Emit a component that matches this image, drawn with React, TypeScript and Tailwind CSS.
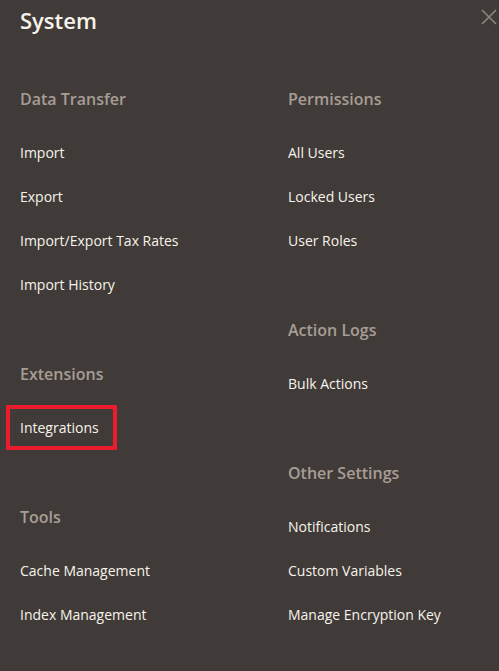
import React from 'react';

type Section = { title: string; items: string[] };

const left: Section[] = [
    { title: 'Data Transfer', items: ['Import', 'Export', 'Import/Export Tax Rates', 'Import History'] },
    { title: 'Extensions', items: ['Integrations'] },
    { title: 'Tools', items: ['Cache Management', 'Index Management'] },
];

const right: Section[] = [
    { title: 'Permissions', items: ['All Users', 'Locked Users', 'User Roles'] },
    { title: 'Action Logs', items: ['Bulk Actions'] },
    { title: 'Other Settings', items: ['Notifications', 'Custom Variables', 'Manage Encryption Key'] },
];

const MenuColumn: React.FC<{ sections: Section[] }> = ({ sections }) => (
    <div className="flex flex-col gap-[45px]">
        {sections.map((s) => (
            <div key={s.title}>
                <div className="h-11 flex items-center text-[16px] font-semibold text-[#a79d95]">{s.title}</div>
                <ul className="mt-[10px]">
                    {s.items.map((item) => (
                        <li key={item} className="relative h-11 flex items-center pb-[2px] text-[14px] text-[#f7f3eb]">
                            {item}
                            {item === 'Integrations' && (
                                <span className="absolute left-[-14px] top-[-1px] w-[111px] h-[45px] border-4 border-[#ed1b2e]" />
                            )}
                        </li>
                    ))}
                </ul>
            </div>
        ))}
    </div>
);

export default function App() {
    return (
        <div className="relative w-[499px] h-[671px] bg-[#403b38] font-['Open_Sans',sans-serif] overflow-hidden">
            {/* Header */}
            <div className="h-10 flex items-center pl-5">
                <h1 className="text-[22px] font-semibold text-[#f7f3eb]">System</h1>
            </div>
            <button className="absolute top-[9px] left-[481px] w-4 h-4 text-[#8c8580]">
                <svg viewBox="0 0 16 16" className="w-4 h-4" fill="none" stroke="currentColor" strokeWidth="1.6">
                    <path d="M1 1L15 15M15 1L1 15" />
                </svg>
            </button>

            {/* Menu */}
            <div className="grid grid-cols-[268px_1fr] pl-5 pt-[37px]">
                <MenuColumn sections={left} />
                <MenuColumn sections={right} />
            </div>
        </div>
    );
}
